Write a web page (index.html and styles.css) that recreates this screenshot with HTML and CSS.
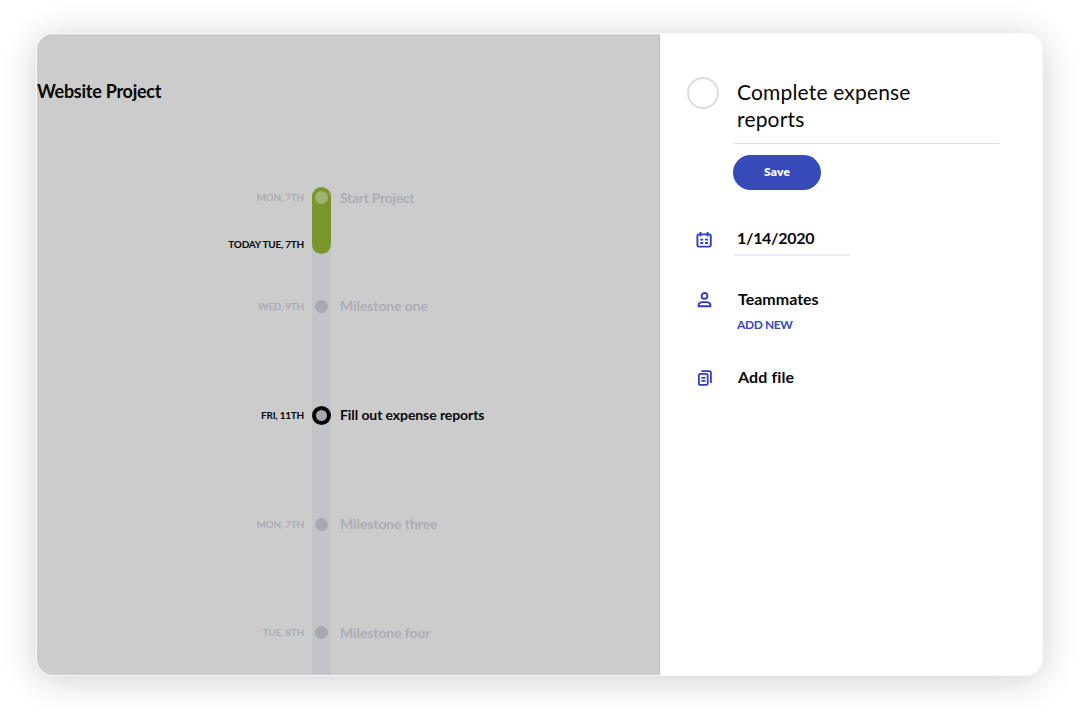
FILE: index.html
```html
<!DOCTYPE html>
<html lang="en">
<head>
<meta charset="utf-8">
<title>Website Project</title>
<link rel="stylesheet" href="styles.css">
</head>
<body>
<div class="window">
  <main class="board">
    <h1 class="board-title">Website Project</h1>
    <div class="timeline">
      <div class="track"><div class="progress"></div></div>
      <div class="row"><span class="date">MON, 7TH</span><i class="dot done"></i><span class="label start">Start Project</span></div>
      <div class="row today"><span class="date active">TODAY TUE, 7TH</span></div>
      <div class="row"><span class="date">WED, 9TH</span><i class="dot"></i><span class="label">Milestone one</span></div>
      <div class="row"><span class="date active">FRI, 11TH</span><i class="dot current"></i><span class="label active">Fill out expense reports</span></div>
      <div class="row"><span class="date">MON, 7TH</span><i class="dot"></i><span class="label">Milestone three</span></div>
      <div class="row"><span class="date">TUE, 8TH</span><i class="dot"></i><span class="label">Milestone four</span></div>
    </div>
  </main>
  <aside class="panel">
    <header class="task">
      <span class="check"></span>
      <div class="task-main">
        <h2 class="task-title">Complete expense<br>reports</h2>
        <button class="save">Save</button>
      </div>
    </header>
    <div class="field due">
      <svg class="icon" width="16" height="16" viewBox="0 0 16 16" fill="none" stroke="#2f3fc0" stroke-width="1.9"><rect x="1.4" y="2.4" width="13.4" height="12.2" rx="1.4"/><path d="M4.5 0v4.6M11.6 0v4.6"/><path d="M4.3 7.7h2.9M9 7.7h2.9M4.3 11h2.9M9 11h2.9" stroke-width="1.8"/></svg>
      <div class="date-input">1/14/2020</div>
    </div>
    <div class="field team">
      <svg class="icon" width="16" height="16" viewBox="0 0 16 16" fill="none" stroke="#2f3fc0" stroke-width="1.9" stroke-linejoin="round"><circle cx="8.5" cy="3.9" r="2.9"/><path d="M2.5 14.3v-.6c0-2.3 1.9-3.6 4.2-3.6h3.6c2.3 0 4.2 1.3 4.2 3.6v.6z"/></svg>
      <div class="field-body">Teammates<a class="add-new">ADD NEW</a></div>
    </div>
    <div class="field file">
      <svg class="icon" width="16" height="16" viewBox="0 0 16 16" fill="none" stroke="#2f3fc0" stroke-width="1.8"><rect x="2.9" y="3.9" width="8.8" height="11" rx="1.2"/><path d="M5.4 1.2h8.2c.8 0 1.3.5 1.3 1.3v10.4"/><path d="M5.4 7.9h4M5.4 10.9h4" stroke-width="1.7"/></svg>
      <div class="field-body">Add file</div>
    </div>
  </aside>
</div>
</body>
</html>
```
FILE: styles.css
```css
* { box-sizing: border-box; }
body {
  margin: 0;
  padding: 34px 38px 42px 37px;
  height: 717px;
  background: #fff;
  font-family: Lato, "Open Sans", sans-serif;
  color: #080808;
}
h1, h2 { margin: 0; }
.window {
  display: grid;
  grid-template-columns: 623px 1fr;
  height: 641px;
  border-radius: 16px;
  overflow: hidden;
  background: #fff;
  box-shadow: 0 0 0 1px #fafafa, 0 4px 36px rgba(0, 0, 0, .2);
}
.board {
  display: flex;
  flex-direction: column;
  background: #ccc;
  border-top: 1px solid #d6d6d6;
  border-right: 1px solid #c3c3c3;
}
.board-title {
  height: 152px;
  padding-top: 43px;
  font-size: 18px;
  line-height: 26px;
  letter-spacing: -0.26px;
  font-weight: 700;
}
.timeline { position: relative; flex: 1; }
.track {
  position: absolute;
  left: 275px;
  top: 0;
  bottom: 0;
  width: 19px;
  border-radius: 10px 10px 0 0;
  background: #c3c4ca;
}
.progress { height: 67px; border-radius: 10px; background: #7b962d; }
.row {
  position: relative;
  display: grid;
  grid-template-columns: 275px 19px 1fr;
  align-items: center;
  height: 21px;
  margin-bottom: 87.8px;
}
.row:nth-child(2) { margin-bottom: 26.3px; }
.row.today { margin-bottom: 40.7px; }
.date {
  padding: 0 8px 1px 0;
  text-align: right;
  font-size: 10px;
  line-height: 14px;
  letter-spacing: -0.24px;
  font-weight: 700;
  color: #adadb5;
}
.label {
  padding-left: 9px;
  font-size: 14px;
  line-height: 20px;
  letter-spacing: -0.09px;
  font-weight: 700;
  color: #adadb5;
}
.label.start { letter-spacing: -0.3px; }
.date.active, .label.active { color: #080808; }
.dot { justify-self: center; width: 13px; height: 13px; border-radius: 50%; background: #a8a8b1; }
.dot.done { background: #a2b36d; }
.dot.current { width: 19px; height: 19px; border: 4px solid #050505; }
.panel { padding: 43px 42px 0 27px; }
.task { display: flex; gap: 14px; }
.check { flex: none; width: 32px; height: 32px; border: 2px solid #dcdcdc; border-radius: 50%; }
.task-main { flex: 1; }
.task-title {
  height: 67px;
  padding: 1px 0 0 4px;
  border-bottom: 1px solid #dcdfe8;
  font-size: 21px;
  line-height: 27px;
  letter-spacing: 0.17px;
  font-weight: 400;
}
.save {
  display: block;
  width: 88px;
  height: 35px;
  margin-top: 11px;
  padding: 0 0 2px;
  border: 0;
  border-radius: 18px;
  background: #3849b8;
  color: #fff;
  font: 800 12px Lato, sans-serif;
  letter-spacing: 0.2px;
}
.field { display: grid; grid-template-columns: 47px 1fr; font-size: 16px; line-height: 20px; font-weight: 700; }
.icon { margin-left: 9px; }
.due { margin-top: 38px; }
.due .icon { margin-top: 4px; }
.date-input {
  width: 116px;
  height: 28px;
  padding-left: 3px;
  border-bottom: 2px solid #e9ecf7;
  letter-spacing: -0.3px;
}
.team { margin-top: 33px; }
.team .icon { margin-top: 3px; }
.field-body { display: flex; flex-direction: column; padding-left: 4px; }
.add-new { margin: 7px 0 0 -1px; font-size: 12px; line-height: 18px; letter-spacing: -0.4px; color: #3849b8; }
.file { margin-top: 33px; }
.file .icon { margin-top: 3px; }
.file .field-body { letter-spacing: 0.1px; }
```
